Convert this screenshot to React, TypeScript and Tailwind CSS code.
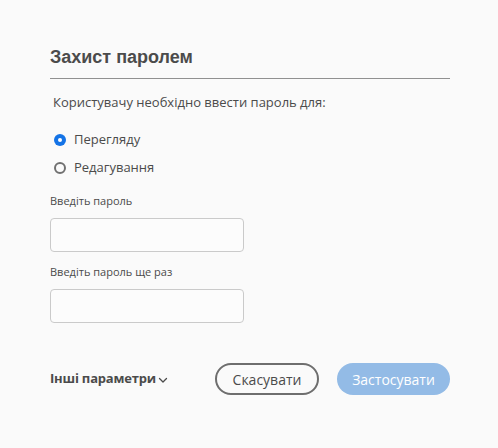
import React from "react";

export default function App() {
  return (
    <div className="w-[498px] h-[448px] bg-[#fafafa] text-[#4b4b4b] pl-[50px] pr-[48px]" style={{ fontFamily: '"Open Sans", sans-serif' }}>
      <div className="pt-[45px]">
        <h1 className="text-[18px] leading-[25px] font-bold text-[#4b4b4b] pb-[8px] border-b border-[#909090]" style={{ fontFamily: '"Liberation Sans", Arial, sans-serif' }}>
          Захист паролем
        </h1>
      </div>
      <p className="mt-[13px] ml-[3px] text-[13px] leading-[20px] text-[#4b4b4b]">Користувачу необхідно ввести пароль для:</p>
      <div className="mt-[18px] ml-[4px] flex flex-col gap-[8px]">
        <label className="flex items-center gap-[8px] h-[20px] text-[13px]">
          <span className="w-[12px] h-[12px] rounded-full bg-[#1473e6] flex items-center justify-center">
            <span className="w-[4px] h-[4px] rounded-full bg-white" />
          </span>
          Перегляду
        </label>
        <label className="flex items-center gap-[8px] h-[20px] text-[13px]">
          <span className="w-[12px] h-[12px] rounded-full border-2 border-[#707070]" />
          Редагування
        </label>
      </div>
      <div className="mt-[15px] text-[11px] leading-[16px]">Введіть пароль</div>
      <div className="mt-[9px] w-[194px] h-[34px] rounded-[4px] border border-[#cacaca] bg-[#fcfcfc]" />
      <div className="mt-[12px] text-[11px] leading-[16px]">Введіть пароль ще раз</div>
      <div className="mt-[9px] w-[194px] h-[34px] rounded-[4px] border border-[#cacaca] bg-[#fcfcfc]" />
      <div className="mt-[40px] flex items-center">
        <div className="flex items-center gap-[2px] text-[13px] font-bold text-[#4b4b4b] tracking-[-0.2px]">
          Інші параметри
          <svg width="10" height="10" viewBox="0 0 10 10" className="mt-[2px]">
            <path d="M1.5 3.5 L5 7 L8.5 3.5" fill="none" stroke="#4b4b4b" strokeWidth="1.3" strokeLinecap="round" strokeLinejoin="round" />
          </svg>
        </div>
        <div className="ml-auto flex items-center gap-[18px]">
          <button className="w-[104px] h-[32px] rounded-full border-2 border-[#6e6e6e] text-[14px] text-[#4b4b4b] bg-transparent">Скасувати</button>
          <button className="w-[113px] h-[32px] rounded-full bg-[#93bbe6] text-[14px] text-white">Застосувати</button>
        </div>
      </div>
    </div>
  );
}
